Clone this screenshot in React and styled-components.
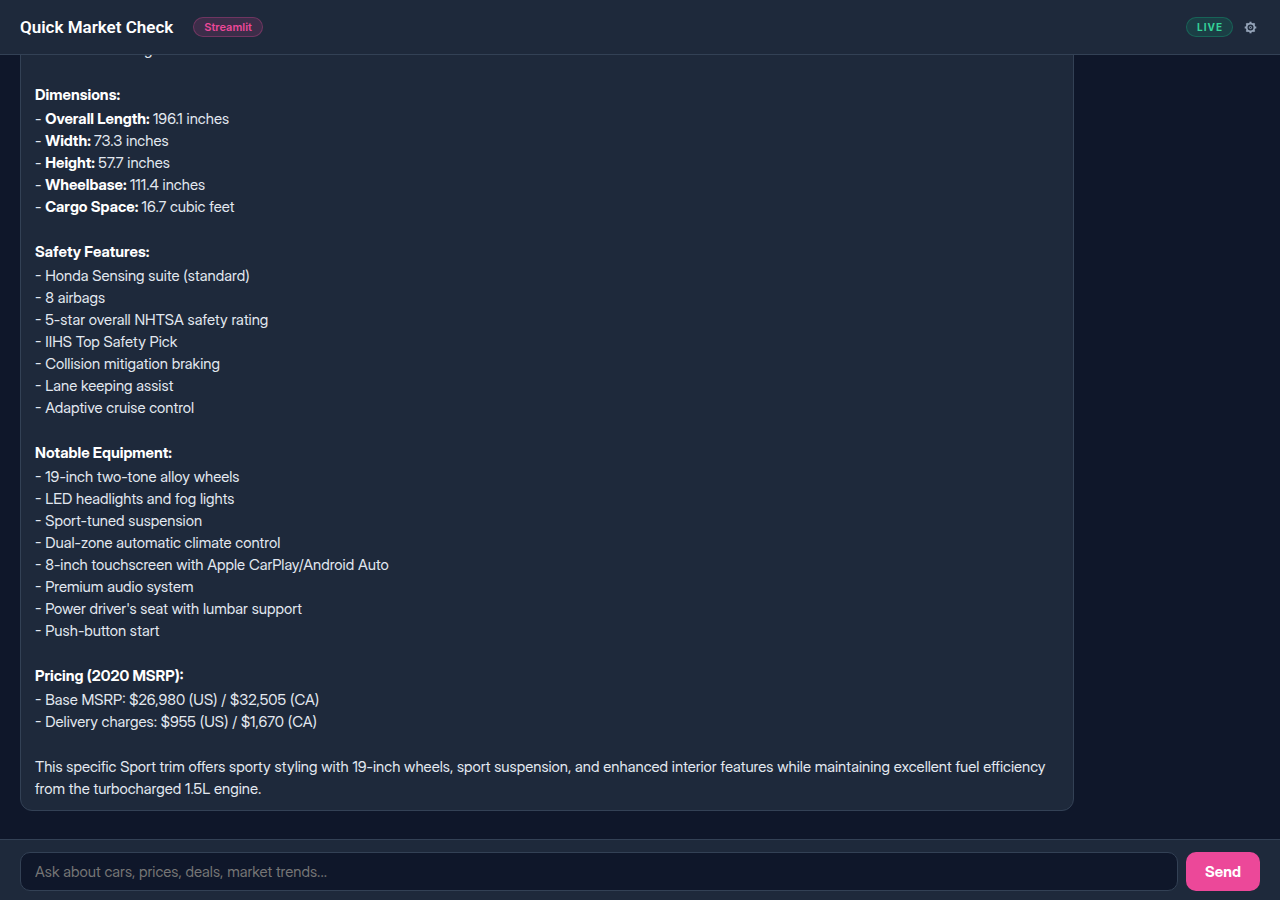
import { useState } from "react";
import styled, { createGlobalStyle } from "styled-components";

const GlobalStyle = createGlobalStyle`
  * {
    box-sizing: border-box;
  }
  body {
    margin: 0;
    background: #0f172a;
    color: #e2e8f0;
    font-family: "Inter Display", Inter, "Liberation Sans", sans-serif;
    font-size: 15px;
  }
`;

const Page = styled.div`
  display: flex;
  flex-direction: column;
  height: 100vh;
`;

const Header = styled.header`
  display: flex;
  align-items: center;
  justify-content: space-between;
  padding: 12px 20px;
  background: #1e293b;
  border-bottom: 1px solid #334155;
`;

const HeaderGroup = styled.div`
  display: flex;
  align-items: center;
  gap: ${({ $gap }) => $gap}px;
`;

const Title = styled.h1`
  margin: 0;
  color: #fff;
  font-family: Roboto, "Liberation Sans", sans-serif;
  font-size: 17px;
  line-height: 30px;
  font-weight: 600;
`;

const Badge = styled.span`
  padding: 0 ${({ $live }) => ($live ? "9px" : "10px")} 0 10px;
  border: 1px solid ${({ $live }) => ($live ? "rgba(16, 185, 129, 0.3)" : "rgba(236, 72, 153, 0.3)")};
  border-radius: 10px;
  background: ${({ $live }) => ($live ? "rgba(16, 185, 129, 0.15)" : "rgba(236, 72, 153, 0.15)")};
  color: ${({ $live }) => ($live ? "#34d399" : "#ec4899")};
  font-family: Inter, "Liberation Sans", sans-serif;
  font-size: ${({ $live }) => ($live ? "10px" : "11px")};
  line-height: 18px;
  font-weight: ${({ $live }) => ($live ? 700 : 600)};
  letter-spacing: ${({ $live }) => ($live ? "1px" : "normal")};
`;

const IconButton = styled.button`
  display: flex;
  padding: 3px;
  border: 0;
  background: none;
  color: #94a3b8;
  cursor: pointer;
`;

// column-reverse keeps the newest message in view
const Messages = styled.main`
  display: flex;
  flex: 1;
  flex-direction: column-reverse;
  min-height: 0;
  padding: 16px 20px 28px;
  overflow-y: auto;
  scrollbar-width: none;
`;

const Message = styled.article`
  display: flex;
  flex-direction: column;
  gap: 23px;
  align-self: flex-start;
  max-width: 85%;
  padding: 10px 14px;
  border: 1px solid #334155;
  border-radius: 12px;
  background: #1e293b;
  line-height: 22px;

  & strong {
    color: #fff;
    font-weight: 700;
  }
`;

const SectionTitle = styled.h2`
  margin: 0 0 2px;
  color: #fff;
  font-size: 15px;
  font-weight: 700;
`;

const SpecList = styled.ul`
  margin: 0;
  padding: 0;
  list-style: none;
`;

const Paragraph = styled.p`
  margin: 0;
`;

const Composer = styled.form`
  display: flex;
  gap: 8px;
  padding: 12px 20px 9px;
  background: #1e293b;
  border-top: 1px solid #334155;
`;

const Input = styled.input`
  flex: 1;
  min-width: 0;
  height: 39px;
  padding: 0 14px;
  border: 1px solid #334155;
  border-radius: 10px;
  outline: none;
  background: #0f172a;
  color: #e2e8f0;
  font: inherit;

  &::placeholder {
    color: #757575;
  }
`;

const SendButton = styled.button`
  padding: 0 19px;
  border: 0;
  border-radius: 10px;
  background: #ec4899;
  color: #fff;
  font: inherit;
  font-weight: 700;
  cursor: pointer;
`;

const sections = [
  {
    items: [{ text: "Fuel Tank: 14.8 gallons" }],
  },
  {
    title: "Dimensions:",
    items: [
      { label: "Overall Length:", text: "196.1 inches" },
      { label: "Width:", text: "73.3 inches" },
      { label: "Height:", text: "57.7 inches" },
      { label: "Wheelbase:", text: "111.4 inches" },
      { label: "Cargo Space:", text: "16.7 cubic feet" },
    ],
  },
  {
    title: "Safety Features:",
    items: [
      { text: "Honda Sensing suite (standard)" },
      { text: "8 airbags" },
      { text: "5-star overall NHTSA safety rating" },
      { text: "IIHS Top Safety Pick" },
      { text: "Collision mitigation braking" },
      { text: "Lane keeping assist" },
      { text: "Adaptive cruise control" },
    ],
  },
  {
    title: "Notable Equipment:",
    items: [
      { text: "19-inch two-tone alloy wheels" },
      { text: "LED headlights and fog lights" },
      { text: "Sport-tuned suspension" },
      { text: "Dual-zone automatic climate control" },
      { text: "8-inch touchscreen with Apple CarPlay/Android Auto" },
      { text: "Premium audio system" },
      { text: "Power driver's seat with lumbar support" },
      { text: "Push-button start" },
    ],
  },
  {
    title: "Pricing (2020 MSRP):",
    items: [
      { text: "Base MSRP: $26,980 (US) / $32,505 (CA)" },
      { text: "Delivery charges: $955 (US) / $1,670 (CA)" },
    ],
  },
];

function GearIcon() {
  return (
    <svg width="13" height="13" viewBox="0 0 13 13" fill="none" stroke="currentColor" aria-hidden="true">
      <circle cx="6.5" cy="6.5" r="3.9" strokeWidth="1.8" />
      <circle cx="6.5" cy="6.5" r="1.1" strokeWidth="1" />
      {[0, 45, 90, 135, 180, 225, 270, 315].map((angle) => (
        <path key={angle} d="M6.5 2.2V0.7" strokeWidth="2" transform={`rotate(${angle} 6.5 6.5)`} />
      ))}
    </svg>
  );
}

function SpecSection({ title, items }) {
  return (
    <section>
      {title && <SectionTitle>{title}</SectionTitle>}
      <SpecList>
        {items.map(({ label, text }) => (
          <li key={label || text}>
            - {label && <strong>{label} </strong>}
            {text}
          </li>
        ))}
      </SpecList>
    </section>
  );
}

function App() {
  const [draft, setDraft] = useState("");

  return (
    <Page>
      <GlobalStyle />
      <Header>
        <HeaderGroup $gap={20}>
          <Title>Quick Market Check</Title>
          <Badge>Streamlit</Badge>
        </HeaderGroup>
        <HeaderGroup $gap={8}>
          <Badge $live>LIVE</Badge>
          <IconButton type="button" aria-label="Settings">
            <GearIcon />
          </IconButton>
        </HeaderGroup>
      </Header>
      <Messages>
        <Message>
          {sections.map((section) => (
            <SpecSection key={section.items[0].text} {...section} />
          ))}
          <Paragraph>
            This specific Sport trim offers sporty styling with 19-inch wheels, sport suspension, and enhanced interior
            features while maintaining excellent fuel efficiency from the turbocharged 1.5L engine.
          </Paragraph>
        </Message>
      </Messages>
      <Composer onSubmit={(e) => e.preventDefault()}>
        <Input
          aria-label="Message"
          placeholder="Ask about cars, prices, deals, market trends..."
          value={draft}
          onChange={(e) => setDraft(e.target.value)}
        />
        <SendButton type="submit">Send</SendButton>
      </Composer>
    </Page>
  );
}

export default App;
